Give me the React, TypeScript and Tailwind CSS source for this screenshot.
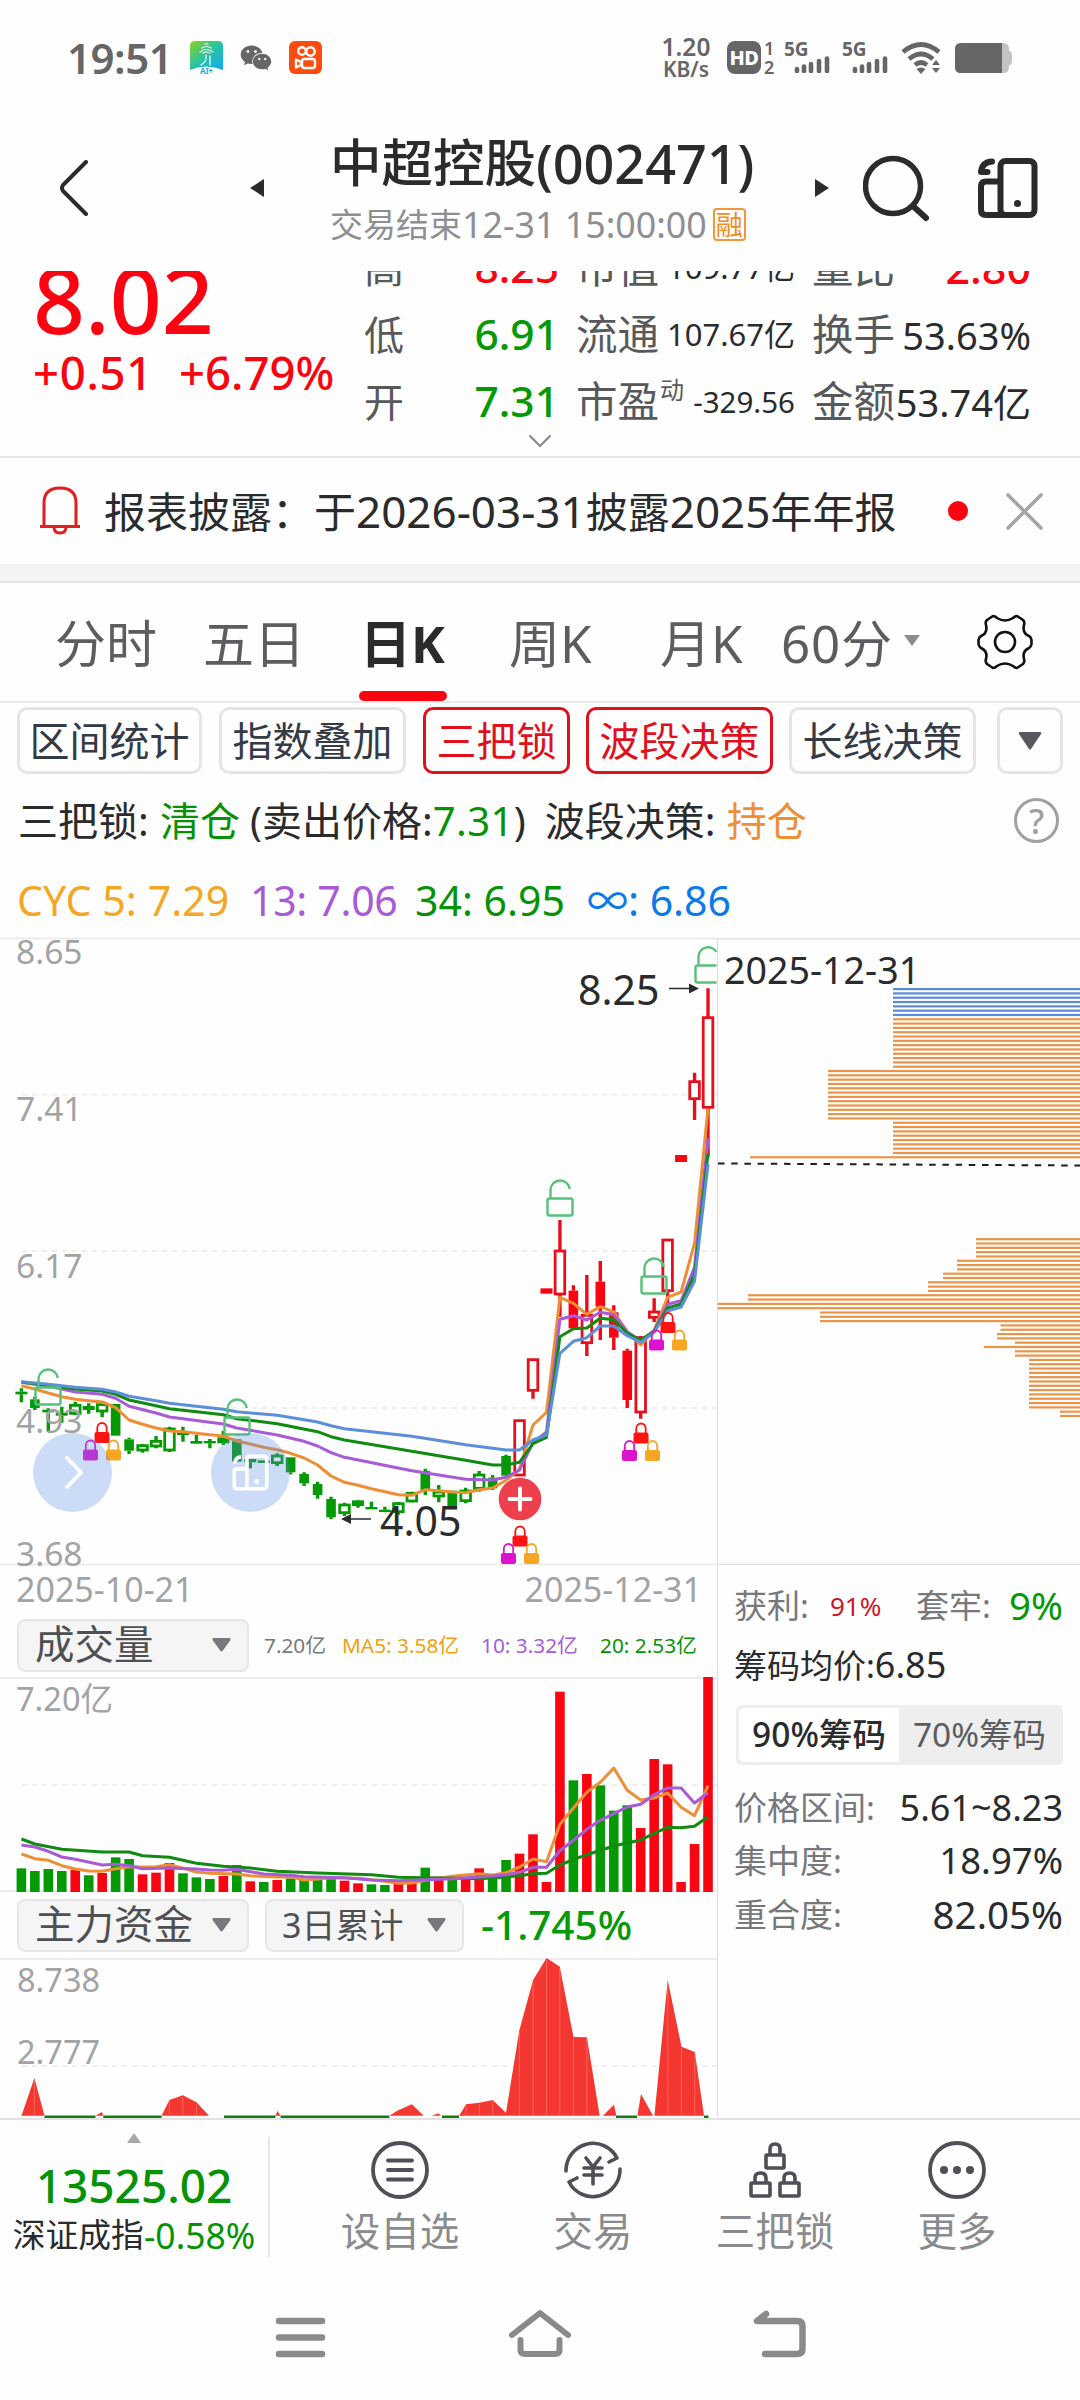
import { FaWeixin } from "react-icons/fa";

type Candle = {
  kind: "up" | "upFill" | "down" | "downHollow";
  top: number;
  bottom: number;
  high: number;
  low: number;
};
type Point = [number, number];

const RED = "#e60f1e";
const GREEN = "#059905";
const ORANGE = "#ef8f35";
const PURPLE = "#a85bd6";
const BLUE = "#5b8fd8";

const STEP = 13.463;
const candleX = (i: number) => 21.4 + STEP * i;
const klineY = (v: number) => 302 + v / 3;
const volumeY = (v: number) => v / 3 - 117;

const c = (
  kind: Candle["kind"],
  top: number,
  bottom: number,
  high = top,
  low = bottom
): Candle => ({ kind, top, bottom, high, low });

const candles: Candle[] = [
  c("down", 455, 463, 445, 487),
  c("down", 478, 504, 470, 510),
  c("down", 509, 517, 505, 575),
  c("down", 518, 527, 500, 548),
  c("downHollow", 496, 520, 485, 525),
  c("down", 498, 510, 490, 521),
  c("downHollow", 494, 513, 490, 532),
  c("down", 492, 587),
  c("down", 598, 632, 593, 642),
  c("downHollow", 617, 630, 612, 638),
  c("downHollow", 604, 618, 588, 625),
  c("downHollow", 567, 630, 560, 636),
  c("down", 577, 585, 560, 605),
  c("down", 603, 611, 585, 611),
  c("down", 603, 610, 597, 625),
  c("down", 592, 610, 572, 615),
  c("down", 598, 665),
  c("down", 657, 667, 657, 685),
  c("down", 661, 669),
  c("downHollow", 648, 668, 640, 678),
  c("down", 652, 697, 652, 703),
  c("down", 702, 730, 697, 738),
  c("down", 732, 765, 725, 776),
  c("down", 777, 832, 770, 837),
  c("downHollow", 795, 818, 788, 828),
  c("down", 781, 798, 779, 803),
  c("down", 801, 808, 785, 808),
  c("down", 809, 816, 800, 817),
  c("downHollow", 791, 815, 786, 824),
  c("downHollow", 760, 783, 755, 787),
  c("down", 693, 750, 686, 765),
  c("downHollow", 756, 768, 735, 787),
  c("down", 752, 798),
  c("downHollow", 753, 782, 743, 790),
  c("downHollow", 705, 745, 693, 755),
  c("down", 713, 745, 705, 750),
  c("down", 648, 707, 644, 712),
  c("up", 542, 705),
  c("up", 359, 451, 357, 476),
  c("upFill", 145, 161),
  c("up", 33, 162, -60, 230),
  c("upFill", 152, 265, 136, 270),
  c("up", 226, 308, 105, 348),
  c("upFill", 125, 200, 63, 300),
  c("upFill", 217, 293, 196, 330),
  c("upFill", 332, 480, 326, 504),
  c("up", 293, 516, 288, 536),
  c("up", 216, 232, 175, 246),
  c("up", 0, 152, -3, 197),
  c("upFill", -255, -234),
  c("up", -475, -424, -502, -360),
  c("up", -667, -398, -755, -248),
];

const cyc5: Point[] = [
  [0, 437], [1, 447], [2, 459], [3, 470], [4, 478], [5, 482], [6, 486],
  [7, 503], [8, 540], [9, 553], [10, 564], [11, 573], [12, 575], [13, 580],
  [14, 584], [15, 588], [16, 603], [17, 612], [18, 622], [19, 629], [20, 640],
  [21, 654], [22, 675], [23, 708], [24, 727], [25, 736], [26, 746], [27, 755],
  [28, 764], [29, 766], [30, 749], [31, 752], [32, 756], [33, 758], [34, 749],
  [35, 744], [36, 721], [37, 688], [38, 555], [39, 517], [40, 172], [41, 190],
  [42, 223], [43, 200], [44, 216], [45, 275], [46, 315], [47, 270], [48, 172],
  [49, 156], [50, 10], [51, -395],
];
const cyc13: Point[] = [
  [0, 427], [2, 438], [4, 456], [6, 463], [7, 475], [8, 499], [10, 519],
  [11, 531], [15, 552], [16, 564], [19, 585], [21, 604], [22, 618], [23, 638],
  [24, 652], [29, 692], [33, 718], [35, 720], [36, 712], [37, 690], [38, 608],
  [39, 576], [40, 238], [41, 227], [42, 240], [43, 217], [44, 224], [45, 275],
  [46, 303], [47, 272], [48, 193], [49, 182], [50, 82], [51, -305],
];
const cyc34: Point[] = [
  [0, 426], [2, 437], [4, 447], [6, 453], [7, 463], [8, 480], [10, 497],
  [11, 506], [15, 524], [16, 536], [19, 551], [22, 575], [23, 590], [24, 600],
  [29, 634], [33, 661], [35, 675], [36, 675], [37, 667], [38, 611], [39, 592],
  [40, 290], [41, 266], [42, 264], [43, 235], [44, 239], [45, 280], [46, 300],
  [47, 274], [48, 204], [49, 192], [50, 105], [51, -260],
];
const cycAll: Point[] = [
  [0, 425], [2, 433], [4, 442], [6, 448], [7, 456], [8, 469], [10, 482],
  [11, 490], [15, 508], [16, 515], [19, 526], [22, 546], [23, 557], [24, 566],
  [29, 589], [33, 614], [36, 630], [37, 630], [38, 600], [39, 585], [40, 340],
  [41, 304], [42, 293], [43, 258], [44, 258], [45, 287], [46, 307], [47, 277],
  [48, 213], [49, 201], [50, 124], [51, -228],
];

const volumes =
  "g925 g933 g927 g933 r930 g946 r939 g892 g897 r943 r938 r909 g940 g952 g957 r948 g915 r964 g966 r960 g955 g958 g955 g948 r962 r970 g973 g975 r972 r968 g923 r950 g958 r960 r925 g950 g900 r881 r823 r966 r395 g661 r642 g676 g752 g736 r804 r597 r613 r966 r852 r351"
    .split(" ")
    .map((v) => ({ up: v[0] === "r", top: Number(v.slice(1)) }));

const ma5: Point[] = [
  [0, 882], [1, 896], [2, 901], [3, 917], [4, 927], [5, 933], [6, 934],
  [7, 926], [8, 920], [9, 921], [10, 920], [11, 914], [12, 925], [13, 936],
  [14, 940], [16, 942], [17, 947], [19, 951], [20, 950], [21, 960], [22, 957],
  [23, 953], [25, 955], [27, 964], [28, 970], [29, 969], [30, 961], [32, 949],
  [34, 941], [35, 945], [36, 938], [37, 921], [38, 897], [39, 905], [40, 793],
  [41, 744], [42, 697], [43, 667], [44, 624], [45, 691], [46, 720], [47, 714],
  [48, 699], [49, 742], [50, 767], [51, 677],
];
const ma10: Point[] = [
  [0, 855], [1, 861], [2, 874], [3, 891], [4, 898], [6, 915], [7, 913],
  [8, 917], [9, 926], [11, 924], [13, 927], [14, 930], [15, 931], [16, 928],
  [18, 942], [20, 946], [21, 950], [24, 953], [26, 960], [28, 962], [32, 956],
  [35, 948], [36, 944], [37, 937], [38, 922], [39, 922], [40, 872], [41, 841],
  [42, 808], [43, 781], [44, 761], [45, 741], [46, 733], [47, 704], [48, 684],
  [49, 684], [50, 729], [51, 698],
];
const ma20: Point[] = [
  [0, 837], [1, 852], [3, 868], [6, 876], [8, 876], [9, 887], [11, 892],
  [13, 910], [15, 919], [17, 924], [19, 934], [22, 939], [26, 944], [28, 952],
  [30, 953], [34, 956], [36, 951], [37, 947], [38, 941], [39, 940], [40, 915],
  [41, 899], [42, 884], [44, 858], [46, 840], [47, 820], [48, 802], [49, 803],
  [50, 799], [51, 770],
];

// [row count, left edge, gap rows before]
const chips: [number, number, number][] = [
  [7, 175, 0], [12, 175, 0], [12, 110, 0], [8, 175, 0], [1, 32, 0],
  [5, 258, 18], [3, 239, 0], [2, 225, 0], [3, 210, 0], [2, 30, 0], [2, 0, 0],
  [3, 102, 0], [2, 282.5, 0], [2, 279, 0], [1, 297, 0], [1, 266, 0],
  [2, 297, 0], [12, 311, 0], [2, 342, 0],
];

const toPoints = (line: Point[], y: (v: number) => number) =>
  line.map(([i, v]) => `${candleX(i).toFixed(1)},${y(v).toFixed(1)}`).join(" ");

function StatusBar() {
  return (
    <div className="flex h-[115px] items-center pl-[67px] text-[#666]">
      <span className="w-[123px] shrink-0 text-[42px] font-semibold leading-none tracking-[-0.5px]">19:51</span>
      <svg className="shrink-0" width="33" height="33" viewBox="0 0 33 33">
        <defs>
          <linearGradient id="app" x1="0" y1="0" x2="1" y2="1">
            <stop offset="0" stopColor="#8bd420" />
            <stop offset="0.5" stopColor="#28c3a4" />
            <stop offset="1" stopColor="#12a9f5" />
          </linearGradient>
        </defs>
        <path d="M5 0H28Q33 0 33 5V29Q16 22 0 29V5Q0 0 5 0Z" fill="url(#app)" />
        <path
          d="M15 3H18M12 7Q16.500 4 21 7M10 11Q16.500 6 23 11M13 12Q16.500 10 20 12M16 14V17Q16 21 11 24M20 15V24"
          fill="none"
          stroke="#fff"
          strokeWidth="1.200"
          strokeLinecap="round"
        />
        <text x="16.500" y="32.500" textAnchor="middle" fontSize="8" fontWeight="700" fill="#1ba8e8">AI+</text>
      </svg>
      <FaWeixin className="ml-[17px] shrink-0" size={32} />
      <svg className="ml-[17px] shrink-0" width="33" height="33" viewBox="0 0 33 33">
        <rect width="33" height="33" rx="6" fill="#ff4b0b" />
        <g fill="none" stroke="#fff" strokeWidth="2.400">
          <circle cx="13" cy="10" r="3.800" />
          <circle cx="21.500" cy="10.500" r="4.200" />
          <rect x="13" y="18" width="13" height="9" rx="2.500" />
          <path d="M12 21L7 18.500V26.500L12 24Z" strokeLinejoin="round" />
        </g>
      </svg>
      <div className="ml-[334px] flex w-[60px] shrink-0 flex-col items-center text-[24.5px] font-semibold leading-[23px]">
        <span>1.20</span>
        <span className="text-[21px]">KB/s</span>
      </div>
      <div className="ml-[11px] flex h-[33px] w-[34px] shrink-0 items-center justify-center rounded-[8px] bg-[#666] text-[20px] font-extrabold leading-none tracking-[-0.5px] text-white">
        HD
      </div>
      <div className="ml-[3px] flex w-[14px] shrink-0 flex-col text-[18px] font-semibold leading-[19px]">
        <span>1</span>
        <span>2</span>
      </div>
      {[0, 1].map((n) => (
        <div key={n} className="relative ml-[6px] h-[34px] w-[52px] shrink-0">
          <span className="absolute left-0 top-0 text-[19px] font-bold leading-[16px]">5G</span>
          <svg className="absolute bottom-[2px] left-[10px]" width="37" height="17" viewBox="0 0 37 17">
            <path d="M3 15V13M10 15V10.500M17 15V8M25 15V5M33 15V2.500" stroke="#666" strokeWidth="4.600" strokeLinecap="round" />
          </svg>
        </div>
      ))}
      <svg className="ml-[7px] shrink-0" width="42" height="32" viewBox="0 0 42 32">
        <g fill="none" stroke="#666" strokeWidth="4.600">
          <path d="M2 10Q20 -5 38 10" />
          <path d="M8 17Q20 7 32 17" />
          <path d="M14 23Q20 18 26 23" />
        </g>
        <path d="M15.500 27Q20 24 24.500 27L20 32Z" fill="#666" />
        <path d="M35 18L39 23H31ZM35 31L39 26H31Z" fill="#666" />
      </svg>
      <svg className="ml-[12px] shrink-0" width="58" height="30" viewBox="0 0 58 30">
        <path d="M6 0H48Q54 0 54 6V8H55Q57 8 57 15T55 22H54V24Q54 30 48 30H6Q0 30 0 24V6Q0 0 6 0Z" fill="#c2c2c2" />
        <path d="M6 0H47V30H6Q0 30 0 24V6Q0 0 6 0Z" fill="#666" />
      </svg>
    </div>
  );
}

function MultiIcon() {
  return (
    <svg width="60" height="60" viewBox="0 0 60 60" fill="none" stroke="#2a2b2d" strokeWidth="6">
      <rect x="22.500" y="3" width="34" height="54" rx="5" />
      <path d="M22 23.500H8Q3 23.500 3 28.500V52Q3 57 8 57H26" />
      <path d="M14 3.500Q4 4 3 14H9.500" strokeLinecap="round" strokeLinejoin="round" />
      <circle cx="39.500" cy="45.500" r="3.500" fill="#2a2b2d" stroke="none" />
    </svg>
  );
}

function Header() {
  return (
    <div className="flex h-[156px] pl-[59px] text-[#2a2b2d]">
      <div className="flex h-[146px] items-center">
        <svg width="30" height="56" viewBox="0 0 30 56">
          <path d="M27 2L4 25Q2 28 4 31L27 54" fill="none" stroke="#2a2b2d" strokeWidth="4" strokeLinecap="round" />
        </svg>
        <svg className="ml-[161px]" width="14" height="18" viewBox="0 0 14 18">
          <path d="M14 0V18L0 9Z" fill="#2a2b2d" />
        </svg>
        <div className="ml-[66px] w-[484px]">
          <div className="flex h-[60px] items-center whitespace-nowrap text-[51.5px] font-medium leading-none">
            中超控股<span className="text-[54px] tracking-[-0.1px]">(002471)</span>
          </div>
          <div className="mt-[13px] flex h-[38px] items-center whitespace-nowrap text-[33px] leading-none text-[#8e8f92]">
            交易结束<span className="text-[35.8px]">12-31 15:00:00</span>
            <span className="ml-[6px] flex h-[33px] w-[33px] items-center justify-center rounded-[4px] border-2 border-[#f0973c] text-[27px] leading-none text-[#ef8a25]">
              融
            </span>
          </div>
        </div>
        <svg className="ml-[1px]" width="14" height="18" viewBox="0 0 14 18">
          <path d="M0 0V18L14 9Z" fill="#2a2b2d" />
        </svg>
        <svg className="ml-[34px]" width="67" height="67" viewBox="0 0 67 67">
          <circle cx="30" cy="31" r="27.500" fill="none" stroke="#2a2b2d" strokeWidth="5.500" />
          <path d="M50 51L63 63" stroke="#2a2b2d" strokeWidth="6" strokeLinecap="round" />
        </svg>
        <div className="ml-[48px]">
          <MultiIcon />
        </div>
      </div>
    </div>
  );
}

const quoteRows = [
  { a: "高", av: "8.25", color: "text-[#fa0412]", b: "市值", bv: "109.77", c: "量比", cv: "2.80", cRed: true },
  { a: "低", av: "6.91", color: "text-[#059905]", b: "流通", bv: "107.67", c: "换手", cv: "53.63%", cRed: false },
  { a: "开", av: "7.31", color: "text-[#059905]", b: "市盈", bv: "-329.56", c: "金额", cv: "53.74亿", cRed: false },
];

function Quote() {
  return (
    <div className="relative flex h-[187px] overflow-hidden border-b-2 border-[#e6e6e6] pl-[33px]">
      <div className="w-[331px] text-[#fa0412]">
        <div className="-mt-[19px] flex h-[95px] items-center text-[91px] font-medium leading-none">8.02</div>
        <div className="mt-[2px] flex h-[48px] items-center text-[45.5px] font-medium leading-none">
          <span className="w-[146px] tracking-[0.7px]">+0.51</span>
          <span>+6.79%</span>
        </div>
      </div>
      <div className="-mt-[37px] text-[41.5px] leading-none text-[#58595b]">
        {quoteRows.map((row) => (
          <div key={row.a} className="flex h-[67px] items-center">
            <div className="flex w-[195px] items-center justify-between">
              <span className="text-[40px]">{row.a}</span>
              <span className={`${row.color} text-[42.5px] font-medium`}>{row.av}</span>
            </div>
            <div className="ml-[17px] flex w-[219px] items-center justify-between">
              <span className="relative">
                {row.b}
                {row.b === "市盈" && <span className="absolute -right-[25px] -top-[3px] text-[24px] leading-none">动</span>}
              </span>
              <span className={row.b === "市盈" ? "text-[29.5px] text-[#2a2b2d]" : "text-[31px] text-[#2a2b2d]"}>
                {row.bv}
                {row.b !== "市盈" && "亿"}
              </span>
            </div>
            <div className="ml-[17px] flex w-[219px] items-center justify-between">
              <span>{row.c}</span>
              <span className={row.cRed ? "text-[43px] font-medium text-[#fa0412]" : "text-[38px] text-[#2a2b2d]"}>{row.cv}</span>
            </div>
          </div>
        ))}
      </div>
      <svg className="absolute left-[528px] top-[163px]" width="24" height="14" viewBox="0 0 24 14">
        <path d="M1.500 1.500L12 12L22.500 1.500" fill="none" stroke="#888" strokeWidth="2.200" />
      </svg>
    </div>
  );
}

function Notice() {
  return (
    <div className="flex h-[106px] items-center pl-[39px]">
      <svg width="42" height="50" viewBox="0 0 42 50" fill="none" stroke="#e02020" strokeWidth="3">
        <path d="M5 40V17Q5 2 21 2T37 17V40" />
        <path d="M1 40.500H41M15 41Q15 47 21 47T27 41" />
      </svg>
      <span className="ml-[23px] whitespace-nowrap text-[42px] leading-none text-[#2a2b2d]">
        报表披露：于<span className="text-[44px]">2026-03-31</span>披露<span className="text-[44px]">2025</span>年年报
      </span>
      <span className="ml-auto h-[20px] w-[20px] rounded-full bg-[#fa0412]" />
      <svg className="ml-[38px] mr-[37px]" width="37" height="37" viewBox="0 0 37 37">
        <path d="M2 2L35 35M35 2L2 35" stroke="#a5a5a5" strokeWidth="3.600" strokeLinecap="round" />
      </svg>
    </div>
  );
}

function GearIcon() {
  return (
    <svg width="58" height="56" viewBox="-29 -28 58 56" fill="none" stroke="#111" strokeWidth="2.600" strokeLinejoin="round">
      <path d="M-18 -22L-12 -26Q-10 -26 -8 -24Q0 -19 8 -24Q10 -26 12 -26L18 -22Q20 -20 19 -17Q17 -9 24 -6Q26 -5 26.500 -2V2Q26 5 24 6Q17 9 19 17Q20 20 18 22L12 26Q10 26 8 24Q0 19 -8 24Q-10 26 -12 26L-18 22Q-20 20 -19 17Q-17 9 -24 6Q-26 5 -26.500 2V-2Q-26 -5 -24 -6Q-17 -9 -19 -17Q-20 -20 -18 -22Z" />
      <circle r="10" />
    </svg>
  );
}

const tabs = [
  { name: "分时", width: "w-[148px]" },
  { name: "五日", width: "w-[160px]" },
  { name: "日K", width: "w-[146px]" },
  { name: "周K", width: "w-[151px]" },
  { name: "月K", width: "w-[121px]" },
];

function Tabs() {
  return (
    <div className="flex h-[120px] border-b-2 border-[#e9e9e9] pl-[55px] text-[51px] leading-none text-[#5c5d60]">
      {tabs.map((tab) => (
        <div key={tab.name} className={`${tab.width} relative flex items-center pt-[3px]`}>
          {tab.name === "日K" ? (
            <>
              <span className="-ml-[3px] font-bold text-[#2a2b2d]">{tab.name}</span>
              <span className="absolute -left-[4px] bottom-0 h-[10px] w-[88px] rounded-[5px] bg-[#fa0412]" />
            </>
          ) : (
            tab.name
          )}
        </div>
      ))}
      <div className="flex items-center pt-[3px]">
        <span className="tracking-[0.8px]">60</span>分
        <svg className="ml-[12px] -mt-[6px]" width="16" height="11" viewBox="0 0 16 11">
          <path d="M0 0H16L8 11Z" fill="#8a8a8a" />
        </svg>
      </div>
      <div className="ml-auto mr-[46px] flex items-center">
        <GearIcon />
      </div>
    </div>
  );
}

const indicators = [
  { name: "区间统计", style: "w-[185px] border-[#e4e5e7] text-[#343a46]" },
  { name: "指数叠加", style: "ml-[17px] w-[187px] border-[#e4e5e7] text-[#343a46]" },
  { name: "三把锁", style: "ml-[17px] w-[147px] border-[#e0101c] text-[#e0101c]" },
  { name: "波段决策", style: "ml-[16px] w-[187px] border-[#e0101c] text-[#e0101c]" },
  { name: "长线决策", style: "ml-[16px] w-[187px] border-[#e4e5e7] text-[#343a46]" },
];

function Indicators() {
  return (
    <>
      <div className="flex h-[71px] pl-[17px] pt-[4px]">
        {indicators.map((item) => (
          <div
            key={item.name}
            className={`${item.style} flex h-[67px] items-center justify-center whitespace-nowrap rounded-[10px] border-[3px] pt-[1px] text-[40px] leading-none`}
          >
            {item.name}
          </div>
        ))}
        <div className="ml-[21px] flex h-[67px] w-[66px] items-center justify-center rounded-[10px] border-[3px] border-[#e4e5e7]">
          <svg width="24" height="18" viewBox="0 0 24 18">
            <path d="M2 0H22Q24 0 23 2L13 17Q12 18 11 17L1 2Q0 0 2 0Z" fill="#58595f" />
          </svg>
        </div>
      </div>
      <div className="flex h-[94px] items-center whitespace-pre pb-[1px] pl-[18px] text-[40px] leading-none text-[#2a2b2d]">
        <span className="w-[142px]">三把锁:</span>
        <span className="w-[90px] text-[#059305]">清仓</span>
        <span>(卖出价格:</span>
        <span className="tracking-[0.4px] text-[#059305]">7.31</span>
        <span className="w-[31px]">)</span>
        <span className="w-[182px]">波段决策:</span>
        <span className="text-[#ef8f35]">持仓</span>
        <div className="ml-auto mr-[21px] flex h-[45px] w-[45px] items-center justify-center rounded-full border-[3px] border-[#a0a0a0] text-[34px] font-medium text-[#a0a0a0]">
          ?
        </div>
      </div>
      <div className="flex h-[70px] items-center whitespace-nowrap pb-[6px] pl-[17px] text-[41px] leading-none">
        <span className="w-[233px] tracking-[0.1px] text-[#f5a623]">CYC 5: 7.29</span>
        <span className="w-[165px] tracking-[-0.3px] text-[#a85bd6]">13: 7.06</span>
        <span className="w-[172px] text-[#059305]">34: 6.95</span>
        <span className="text-[#0a7aea]">∞: 6.86</span>
      </div>
    </>
  );
}

function OpenLock({ x, y }: { x: number; y: number }) {
  return (
    <g transform={`translate(${x} ${y})`} fill="none" stroke="#56c178" strokeWidth="2.400">
      <rect x="-12.500" y="19.500" width="25" height="17" rx="2" />
      <path d="M-9.500 19V10.500A9.700 9.700 0 0 1 9.800 10" />
    </g>
  );
}

function TripleLock({ x, y }: { x: number; y: number }) {
  const locks = [
    { dx: 0, dy: 0, color: "#ff1212" },
    { dx: -11.5, dy: 17.5, color: "#dd12cf" },
    { dx: 11.5, dy: 17.5, color: "#f6a623" },
  ];
  return (
    <g>
      {locks.map((l) => (
        <g key={l.color} transform={`translate(${x + l.dx} ${y + l.dy})`}>
          <path d="M-4.700 12V6A4.700 5 0 0 1 4.700 6V12" fill="none" stroke={l.color} strokeWidth="1.800" />
          <rect x="-7.500" y="10" width="15" height="11" rx="2" fill={l.color} />
        </g>
      ))}
    </g>
  );
}

function Kline() {
  const lines = [
    { points: cyc5, color: ORANGE },
    { points: cyc13, color: PURPLE },
    { points: cyc34, color: "#118a11" },
    { points: cycAll, color: BLUE },
  ];
  return (
    <svg width="717" height="627" viewBox="0 0 717 627" className="block overflow-visible">
      <path d="M0 0.500H717M0 626.500H717" stroke="#ececec" strokeWidth="2" />
      <path d="M22 156.500H717M22 313H717M22 470H717" stroke="#eeeeee" strokeWidth="2" strokeDasharray="5 5" />
      {candles.map((k, i) => {
        const x = candleX(i);
        const up = k.kind === "up" || k.kind === "upFill";
        const hollow = k.kind === "up" || k.kind === "downHollow";
        const color = up ? (hollow ? RED : "#fa0412") : GREEN;
        const top = klineY(k.top);
        const bottom = klineY(k.bottom);
        const w = hollow ? 9.6 : bottom - top < 8 ? 12 : 9.6;
        return (
          <g key={i} stroke={color} strokeWidth="3.400">
            <path d={`M${x} ${klineY(k.high)}V${top}M${x} ${bottom}V${klineY(k.low)}`} />
            <rect
              x={x - w / 2}
              y={top}
              width={w}
              height={bottom - top}
              fill={hollow ? "#fff" : color}
              stroke={hollow ? color : "none"}
              strokeWidth="2.800"
            />
          </g>
        );
      })}
      <g fontSize="33.500" fill="#a2a3a5">
        <text x="16" y="26">8.65</text>
        <text x="16" y="183">7.41</text>
        <text x="16" y="340">6.17</text>
        <text x="16" y="495">4.93</text>
        <text x="16" y="628">3.68</text>
      </g>
      <g fontSize="41" fill="#2a2b2d">
        <text x="578" y="67">8.25</text>
        <text x="380" y="598">4.05</text>
      </g>
      <path d="M669 50.500H690M371 581H350" stroke="#2a2b2d" strokeWidth="1.500" />
      <path d="M689 45.500L699 50.500L689 55.500ZM351 576L341 581L351 586Z" fill="#2a2b2d" />
      {lines.map((line) => (
        <polyline key={line.color} points={toPoints(line.points, klineY)} fill="none" stroke={line.color} strokeWidth="3" strokeLinejoin="round" />
      ))}
      <OpenLock x={48} y={430} />
      <OpenLock x={237} y={460} />
      <OpenLock x={560} y={241} />
      <OpenLock x={654} y={319} />
      <g transform="translate(708 8)" fill="none" stroke="#56c178" strokeWidth="2.400">
        <path d="M8.500 19.500H-10.500Q-12.500 19.500 -12.500 21.500V34.500Q-12.500 36.500 -10.500 36.500H8.500M-9.500 19V10.500A9.700 9.700 0 0 1 8.500 6" />
      </g>
      <TripleLock x={102} y={484} />
      <TripleLock x={641} y={484.5} />
      <TripleLock x={668} y={374} />
      <TripleLock x={520} y={587.5} />
      <circle cx="72.500" cy="534.500" r="39.500" fill="#5a8fe6" fillOpacity="0.300" />
      <path d="M67 520L81 534.500L67 549" fill="none" stroke="#fff" strokeWidth="3.800" strokeLinecap="round" strokeLinejoin="round" />
      <circle cx="250.400" cy="534.500" r="39.500" fill="#5a8fe6" fillOpacity="0.300" />
      <g transform="translate(232.500 516.500) scale(0.600)" fill="none" stroke="#fff" strokeWidth="6">
        <rect x="24" y="3" width="33" height="54" rx="4" />
        <path d="M24 24H7Q3 24 3 28V53Q3 57 7 57H24M4 15Q4 5 14 4" />
        <circle cx="40" cy="45" r="4" fill="#fff" stroke="none" />
      </g>
      <circle cx="520" cy="561" r="21.300" fill="#ee3f4d" />
      <path d="M509.500 561H530.500M520 550.500V571.500" stroke="#fff" strokeWidth="4" strokeLinecap="round" />
    </svg>
  );
}

function Volume() {
  return (
    <svg width="717" height="215" viewBox="0 0 717 215" className="block">
      <path d="M0 1H717M0 214H717" stroke="#ececec" strokeWidth="2" />
      <path d="M22 108H717" stroke="#eeeeee" strokeWidth="2" strokeDasharray="5 5" />
      <text x="16" y="34" fontSize="32.500" fill="#a2a3a5">7.20亿</text>
      {volumes.map((v, i) => (
        <rect
          key={i}
          x={candleX(i) - 4.8}
          y={volumeY(v.top)}
          width="9.600"
          height={215 - volumeY(v.top)}
          fill={v.up ? "#fa0412" : GREEN}
        />
      ))}
      <g fill="none" strokeWidth="3" strokeLinejoin="round">
        <polyline points={toPoints(ma5, volumeY)} stroke={ORANGE} />
        <polyline points={toPoints(ma20, volumeY)} stroke="#118a11" />
        <polyline points={toPoints(ma10, volumeY)} stroke={PURPLE} />
      </g>
    </svg>
  );
}

function Funds() {
  return (
    <svg width="717" height="160" viewBox="0 0 717 160" className="block">
      <path d="M0 1H717" stroke="#ececec" strokeWidth="2" />
      <path d="M22 108H717" stroke="#eeeeee" strokeWidth="2" strokeDasharray="5 5" />
      <g fontSize="32.500" fill="#a2a3a5">
        <text x="17" y="34">8.738</text>
        <text x="17" y="106">2.777</text>
      </g>
      <path
        fill="#f43831"
        d="M21.500 157.700L34.400 120L44.500 157.700ZM95.500 157.700L102 154L103.300 157.700ZM161.600 157.700L169.400 142L182.800 137.300L196.500 144.300L209 157.700ZM275.500 157.700L277.400 153L280.600 157.700ZM389.400 157.700L397.200 152.700L411.900 146.300L423.800 157.700ZM431.700 157.700L438.500 155.300L440.800 157.700ZM459.200 157.700L466 146.300L479.400 144.700L492.700 142L506 154.700L519.400 72L533.100 22L546.500 0L559.800 8.700L573.500 79L586.900 79.300L599.700 157.700ZM602.900 157.700L614 146.700L616.300 157.700ZM637.400 157.700L641 136L653 157.700ZM654.400 157.700L667.700 22L681.500 88.700L694.800 94L704 157.700Z"
      />
      <path d="M44.500 158.800H95.500M103.300 158.800H161.600M224 158.800H275.500M280.600 158.800H389.400M442 158.800H459M616 158.800H637M704 158.800H708.500" stroke="#147a14" strokeWidth="2.400" />
      <path
        d="M34.400 122V157M169.400 143V157M182.800 139V157M196.500 146V157M466 147V157M479.400 146V157M492.700 143V157M519.400 74V157M533.100 24V157M546.500 2V157M559.800 10V157M573.500 80V157M586.900 80V157M667.700 24V157M681.500 90V157M694.800 95V157"
        stroke="#ff8a80"
        strokeWidth="0.800"
        opacity="0.700"
      />
    </svg>
  );
}

function Select({ label, small = false }: { label: string; small?: boolean }) {
  return (
    <div
      className={`flex items-center justify-between rounded-[8px] border-2 border-[#e6e6e6] bg-[#f5f5f5] leading-none text-[#4f5053] ${
        small ? "h-[53px] w-[199px] pl-[15px] pr-[16px] text-[34px]" : "h-[53px] w-[232px] pl-[16px] pr-[16px] text-[39.5px]"
      }`}
    >
      <span className="whitespace-nowrap">{label}</span>
      <svg width="19" height="14" viewBox="0 0 19 14">
        <path d="M1.500 0H17.500Q19 0 18.500 2L10.500 13Q9.500 14 8.500 13L0.500 2Q0 0 1.500 0Z" fill="#77787b" />
      </svg>
    </div>
  );
}

function ChipPanel() {
  let row = 0;
  const bars = chips.flatMap(([count, left, gap]) => {
    row += gap;
    return Array.from({ length: count }, () => ({ left, row: row++ }));
  });
  return (
    <div className="w-[363px] border-l border-[#dedede]">
      <svg width="362" height="627" viewBox="0 0 362 627" className="block">
        <path d="M0 0.500H363M0 626.500H363" stroke="#e2e2e2" strokeWidth="2" />
        <text x="6" y="46" fontSize="37.600" fill="#2a2b2d">2025-12-31</text>
        {bars.map((bar) => (
          <rect
            key={bar.row}
            x={bar.left}
            y={50 + bar.row * 4.312}
            width={363 - bar.left}
            height="2.200"
            fill={bar.row < 7 ? "#5b8bd6" : "#e8954a"}
          />
        ))}
        <path d="M0 225.500L363 227.500" stroke="#1e1e1e" strokeWidth="2" strokeDasharray="6.500 6.700" />
      </svg>
      <div className="pl-[16px] pr-[17px] text-[33px] leading-none text-[#77787b]">
        <div className="flex h-[81px] items-center whitespace-nowrap">
          <span className="w-[96px]">获利:</span>
          <span className="w-[86px] text-[26px] text-[#d0142a]">91%</span>
          <span>套牢:</span>
          <span className="ml-auto text-[38.5px] text-[#059905]">9%</span>
        </div>
        <div className="flex h-[38px] items-center whitespace-nowrap text-[#2a2b2d]">
          筹码均价:<span className="text-[36px]">6.85</span>
        </div>
        <div className="ml-[2px] mt-[21px] flex h-[60px] rounded-[6px] bg-[#eeeeee] p-[3px]">
          <span className="flex w-[160px] items-center justify-center whitespace-nowrap rounded-l-[5px] bg-white text-[33.5px] font-medium text-[#2a2b2d]">90%筹码</span>
          <span className="flex flex-1 items-center justify-center whitespace-nowrap text-[33.5px] text-[#5c5d60]">70%筹码</span>
        </div>
        <div className="mt-[16px] flex h-[53px] items-center justify-between">
          价格区间:<span className="text-[36px] text-[#2a2b2d]">5.61~8.23</span>
        </div>
        <div className="flex h-[53px] items-center justify-between">
          集中度:<span className="text-[36.5px] text-[#2a2b2d]">18.97%</span>
        </div>
        <div className="flex h-[54px] items-center justify-between">
          重合度:<span className="text-[38.5px] text-[#2a2b2d]">82.05%</span>
        </div>
      </div>
    </div>
  );
}

function Charts() {
  return (
    <div className="flex h-[1180px]">
      <div className="w-[717px]">
        <Kline />
        <div className="flex h-[48px] items-center justify-between pl-[16px] pr-[15px] text-[34px] leading-none text-[#a2a3a5]">
          <span>2025-10-21</span>
          <span>2025-12-31</span>
        </div>
        <div className="flex h-[64px] items-center whitespace-nowrap pl-[17px] text-[20.8px] leading-none">
          <Select label="成交量" />
          <span className="ml-[15px] w-[78px] text-[#77787b]">7.20亿</span>
          <span className="w-[139px] text-[#f0a010]">MA5: 3.58亿</span>
          <span className="w-[119px] text-[#a85bd6]">10: 3.32亿</span>
          <span className="text-[#059305]">20: 2.53亿</span>
        </div>
        <Volume />
        <div className="flex h-[66px] items-center pl-[17px]">
          <Select label="主力资金" />
          <div className="ml-[16px]">
            <Select label="3日累计" small />
          </div>
          <span className="ml-[17px] text-[40.5px] font-medium leading-none text-[#059905]">-1.745%</span>
        </div>
        <Funds />
      </div>
      <ChipPanel />
    </div>
  );
}

function BottomBar() {
  return (
    <div className="flex h-[152px] border-t-2 border-[#e2e2e2]">
      <div className="flex w-[268px] flex-col items-center whitespace-nowrap">
        <svg className="mt-[13px]" width="14" height="10" viewBox="0 0 14 10">
          <path d="M7 0L14 10H0Z" fill="#a8a8a8" />
        </svg>
        <span className="mt-[16px] text-[46px] font-medium leading-[52px] text-[#059305]">13525.02</span>
        <span className="mt-[5px] flex items-center text-[32.8px] leading-[38px] text-[#2a2b2d]">
          深证成指<span className="text-[35.5px] text-[#059305]">-0.58%</span>
        </span>
      </div>
      <div className="mt-[17px] h-[120px] w-[2px] bg-[#e6e6e6]" />
      <div className="flex text-[39.5px] leading-none text-[#8a8b8e]">
        <div className="flex w-[260px] flex-col items-center pt-[20px]">
          <svg width="60" height="60" viewBox="0 0 60 60" fill="none" stroke="#4e4f57" strokeWidth="3.800" strokeLinecap="round">
            <circle cx="30" cy="30" r="27" />
            <path d="M18 20.500H42M18 30H42M18 39.500H42" />
          </svg>
          <span className="mt-[12px]">设自选</span>
        </div>
        <div className="flex w-[126px] flex-col items-center pt-[20px]">
          <svg width="60" height="60" viewBox="0 0 60 60" fill="none" stroke="#4e4f57" strokeWidth="3.600" strokeLinecap="round">
            <path d="M3 31A27 27 0 0 1 54 18L46 22M57 29A27 27 0 0 1 6 42L14 38" strokeLinejoin="round" />
            <path d="M23 18L30 27L37 18M30 27V44M21 28H39M21 35H39" />
          </svg>
          <span className="mt-[12px]">交易</span>
        </div>
        <div className="flex w-[238px] flex-col items-center pt-[20px]">
          <svg width="60" height="60" viewBox="0 0 60 60" fill="none" stroke="#4e4f57" strokeWidth="3.600">
            <rect x="21" y="15" width="18" height="13" rx="1" />
            <path d="M25 14V9Q25 4 30 4T35 9V14" />
            <rect x="6" y="43" width="19" height="13" rx="1" />
            <path d="M10 42V38Q10 33 15.500 33T21 38V42" />
            <rect x="35" y="43" width="19" height="13" rx="1" />
            <path d="M39 42V38Q39 33 44.500 33T50 38V42" />
          </svg>
          <span className="mt-[12px]">三把锁</span>
        </div>
        <div className="flex w-[126px] flex-col items-center pt-[20px]">
          <svg width="60" height="60" viewBox="0 0 60 60">
            <circle cx="30" cy="30" r="27" fill="none" stroke="#4e4f57" strokeWidth="3.800" />
            <g fill="#4e4f57">
              <circle cx="17" cy="30" r="4" />
              <circle cx="30" cy="30" r="4" />
              <circle cx="43" cy="30" r="4" />
            </g>
          </svg>
          <span className="mt-[12px]">更多</span>
        </div>
      </div>
    </div>
  );
}

function NavKeys() {
  return (
    <div className="flex h-[130px] items-start pl-[273px] pt-[37px]">
      <svg width="56" height="56" viewBox="0 0 56 56" stroke="#8a8a8a" strokeWidth="6.500" strokeLinecap="round">
        <path d="M6 14H49M6 30.500H49M6 47H49" />
      </svg>
      <svg className="ml-[178px]" width="66" height="56" viewBox="0 0 66 56" fill="none" stroke="#8a8a8a" strokeWidth="6" strokeLinecap="round" strokeLinejoin="round">
        <path d="M5 28L33 6L61 28" />
        <path d="M13.500 33V43Q13.500 47 18 47H48Q52.500 47 52.500 43V33" />
      </svg>
      <svg className="ml-[176px]" width="62" height="56" viewBox="0 0 62 56" fill="none" stroke="#8a8a8a" strokeWidth="6.500" strokeLinecap="round" strokeLinejoin="round">
        <path d="M17 7L8 14H48Q53.500 14 53.500 19V42Q53.500 47 48 47H16" />
      </svg>
    </div>
  );
}

export default function App() {
  return (
    <div className="flex h-[2400px] w-[1080px] flex-col overflow-hidden bg-[#fefefe] font-['Noto_Sans','Noto_Sans_CJK_SC',sans-serif]">
      <StatusBar />
      <Header />
      <Quote />
      <Notice />
      <div className="h-[19px] border-b-2 border-[#e4e4e4] bg-[#f4f4f4]" />
      <Tabs />
      <Indicators />
      <Charts />
      <BottomBar />
      <NavKeys />
    </div>
  );
}
